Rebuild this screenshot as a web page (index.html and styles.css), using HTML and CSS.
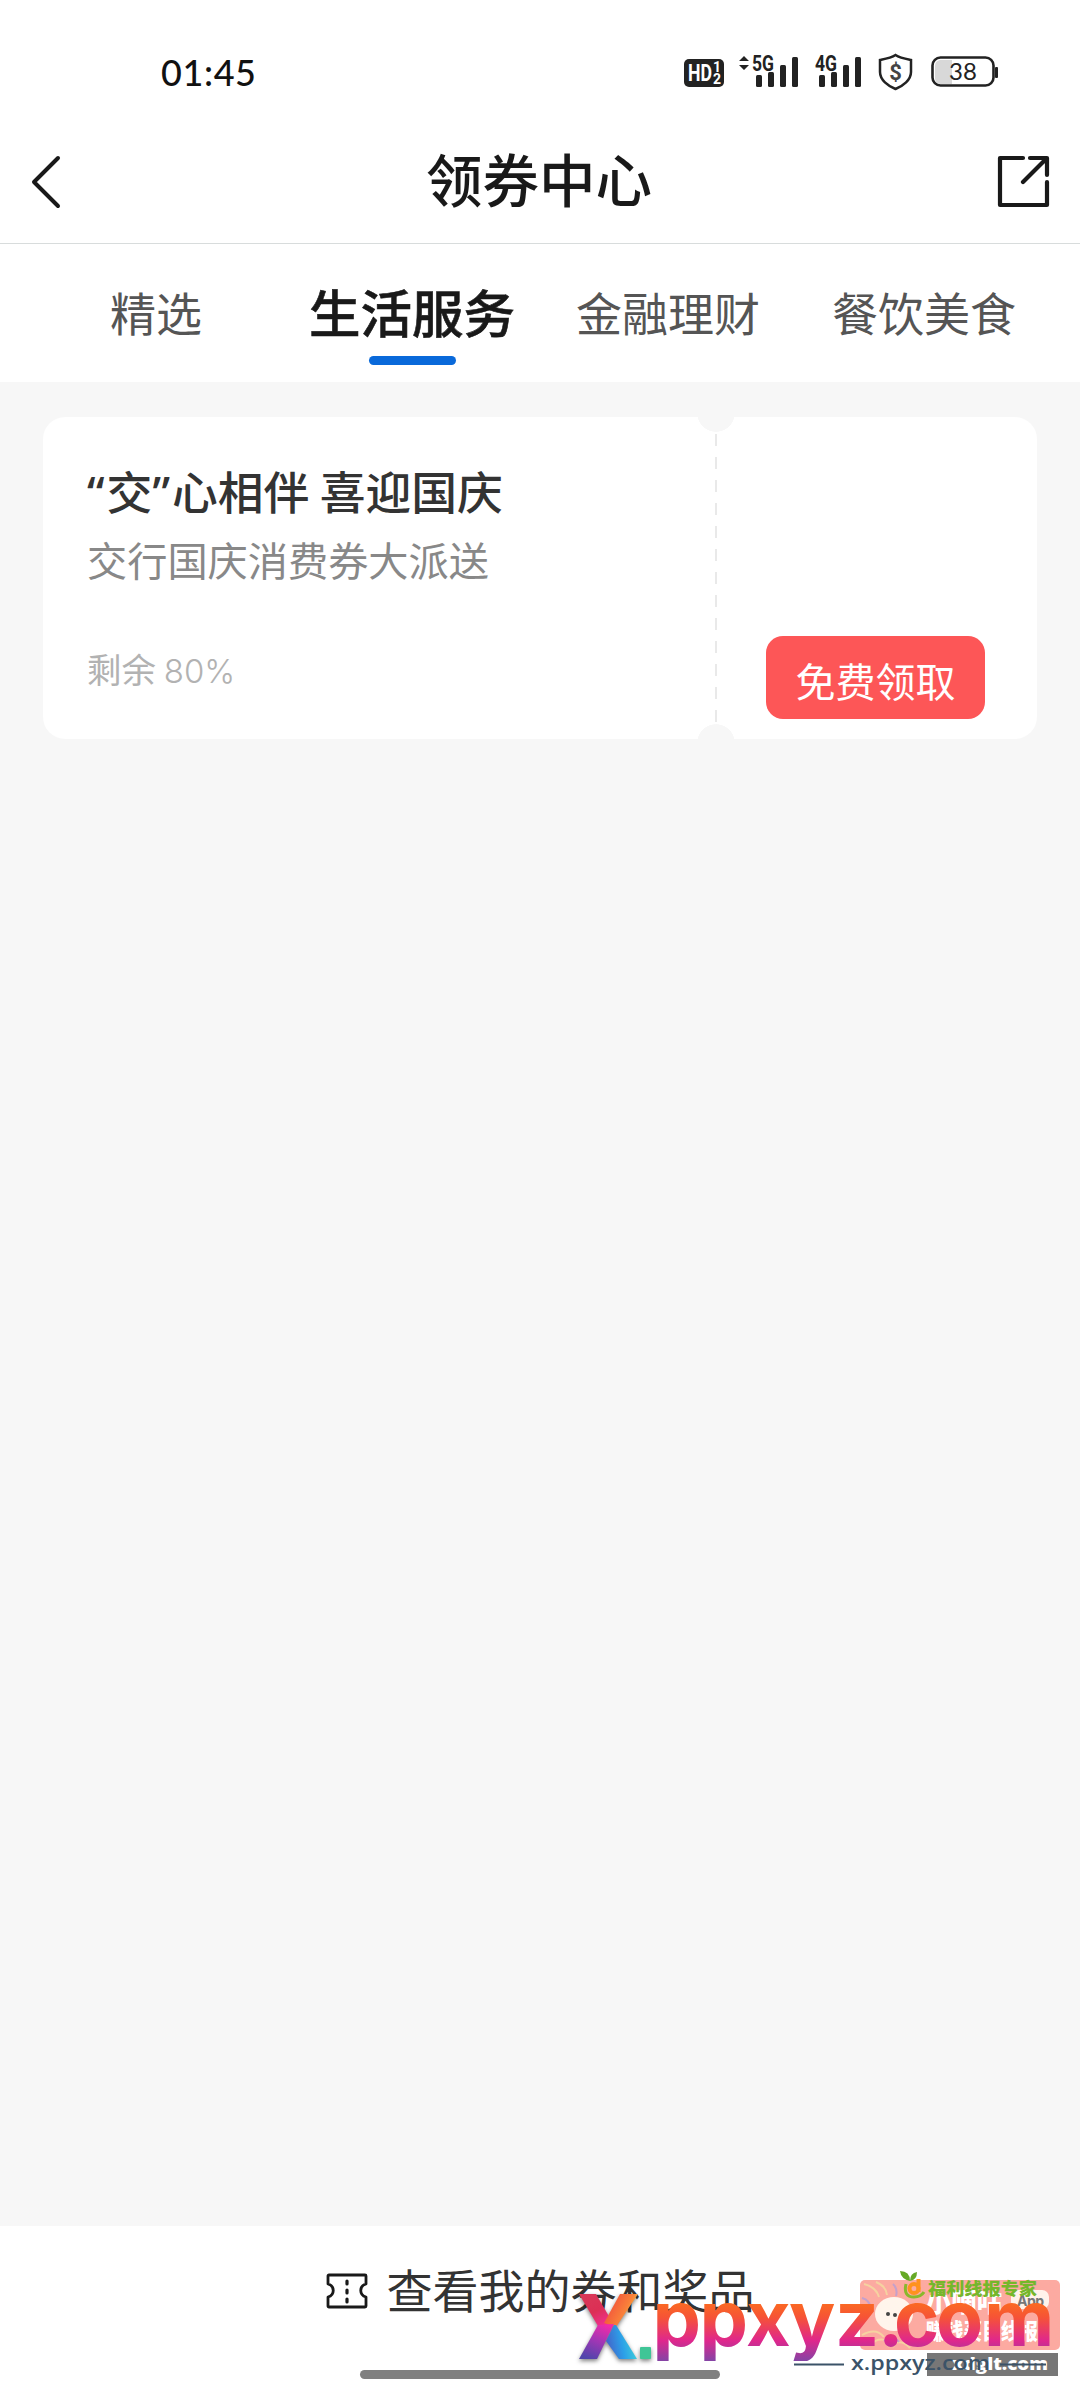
FILE: index.html
```html
<!DOCTYPE html>
<html lang="zh-CN">
<head>
<meta charset="utf-8">
<title>领券中心</title>
<link rel="stylesheet" href="styles.css">
</head>
<body>
<div class="screen">
  <header class="status">
    <time class="clock">01:45</time>
    <svg class="status-icons" width="320" height="44" viewBox="0 0 320 44">
      <g fill="#222">
        <rect x="0" y="7" width="40" height="28" rx="5"/>
        <path d="M55 9l5-5 5 5zM55 13l5 5 5-5z"/>
        <rect x="72" y="23" width="6" height="12" rx="1.5"/><rect x="84" y="20" width="6" height="15" rx="1.5"/><rect x="96" y="13" width="6" height="22" rx="1.5"/><rect x="108" y="5" width="6" height="30" rx="1.5"/>
        <rect x="135" y="23" width="6" height="12" rx="1.5"/><rect x="147" y="20" width="6" height="15" rx="1.5"/><rect x="159" y="13" width="6" height="22" rx="1.5"/><rect x="171" y="5" width="6" height="30" rx="1.5"/>
        <rect x="311" y="15" width="3" height="11" rx="1"/>
      </g>
      <g class="status-text">
        <text class="hd" x="4" y="28.500" textLength="24" lengthAdjust="spacingAndGlyphs">HD</text>
        <text class="hd-num" x="29" y="20">1</text><text class="hd-num" x="29" y="32">2</text>
        <text class="net" x="68" y="18.500" textLength="22" lengthAdjust="spacingAndGlyphs">5G</text>
        <text class="net" x="131" y="18.500" textLength="22" lengthAdjust="spacingAndGlyphs">4G</text>
        <text class="coin" x="211.500" y="28" text-anchor="middle">$</text>
      </g>
      <path d="M211.500 3C216 6 222 7 227 8V20C227 28 219 34 211.500 37C204 34 196 28 196 20V8C201 7 207 6 211.500 3Z" fill="none" stroke="#222" stroke-width="2.500"/>
      <path d="M256 8h12v24h-12q-5-1-5-6V14q0-5 5-6z" fill="#d8d8d8"/>
      <rect x="248.500" y="5.500" width="61" height="28" rx="8" fill="none" stroke="#222" stroke-width="2.600"/>
      <text class="level" x="279" y="28" text-anchor="middle">38</text>
    </svg>
  </header>
  <nav class="titlebar">
    <svg width="32" height="54" viewBox="0 0 32 54"><path d="M28 3L4 27l24 24" fill="none" stroke="#191919" stroke-width="4" stroke-linecap="round" stroke-linejoin="round"/></svg>
    <h1>领券中心</h1>
    <svg width="54" height="54" viewBox="0 0 54 54"><path d="M26 3H3v47h47V27M33 3h17v17M49 4L26 27" fill="none" stroke="#191919" stroke-width="4.200" stroke-linecap="round" stroke-linejoin="round"/></svg>
  </nav>
  <div class="tabs">
    <a class="tab">精选</a><a class="tab active">生活服务</a><a class="tab">金融理财</a><a class="tab">餐饮美食</a>
  </div>
  <main class="content">
    <article class="coupon">
      <section class="info">
        <h2><span class="quote">“</span>交<span class="quote">”</span>心相伴 喜迎国庆</h2>
        <p class="desc">交行国庆消费券大派送</p>
        <p class="left">剩余 <span>80%</span></p>
      </section>
      <section class="action"><button>免费领取</button></section>
    </article>
  </main>
  <footer class="footer">
    <div class="my-coupons">
      <svg width="42" height="36" viewBox="0 0 42 36"><path d="M3 2H39Q40 2 40 3V11C33 13 33 22 40 24V33Q40 34 39 34H3Q2 34 2 33V24C9 22 9 13 2 11V3Q2 2 3 2Z" fill="none" stroke="#191919" stroke-width="2.800" stroke-linejoin="round"/><path d="M21 8v3M21 17v3M21 26v3" stroke="#191919" stroke-width="3.200" stroke-linecap="round"/></svg>
      <span>查看我的券和奖品</span>
    </div>
    <div class="handle"></div>
    <svg class="marks" width="520" height="150" viewBox="560 2250 520 150">
      <defs>
        <linearGradient id="warm" gradientUnits="userSpaceOnUse" x1="0" y1="2303" x2="0" y2="2361"><stop offset="0" stop-color="#fb6a22"/><stop offset=".25" stop-color="#f65336"/><stop offset=".65" stop-color="#df278d"/><stop offset="1" stop-color="#8444a5"/></linearGradient>
        <linearGradient id="topLeft" x1="0" y1="0" x2=".6" y2="1"><stop offset="0" stop-color="#d83a58"/><stop offset=".6" stop-color="#dc2f55"/><stop offset="1" stop-color="#ef2f8c"/></linearGradient>
        <linearGradient id="topRight" x1="0" y1="0" x2="1" y2=".5"><stop offset=".2" stop-color="#f2503c"/><stop offset=".7" stop-color="#f9813a"/><stop offset="1" stop-color="#eed83f"/></linearGradient>
        <linearGradient id="bottomLeft" x1=".7" y1="0" x2=".3" y2="1"><stop offset="0" stop-color="#f02ba8"/><stop offset=".45" stop-color="#a535b5"/><stop offset="1" stop-color="#5045ab"/></linearGradient>
        <linearGradient id="bottomRight" x1="0" y1=".6" x2="1" y2=".4"><stop offset="0" stop-color="#4560c8"/><stop offset=".5" stop-color="#2c9fe8"/><stop offset="1" stop-color="#40d6d8"/></linearGradient>
        <clipPath id="descenders"><rect x="650" y="2290" width="410" height="71"/></clipPath>
      </defs>
      <rect x="860" y="2280" width="200" height="70" rx="5" fill="#fcaaa1"/>
      <g fill="none" stroke="#f6d2a0" stroke-width="2"><path d="M864 2284q12 3 15 13M876 2282q10 4 11 13M862 2335q14-8 22 2M870 2345q12-12 24 2M888 2347q12-10 22 1"/><path d="M862 2298q8 2 9 11M884 2341q8-8 15 1M893 2284q5 5 3 12" stroke="#c5a0cb"/></g>
      <ellipse cx="894" cy="2314" rx="19" ry="17" fill="#fff5ec"/><circle cx="888" cy="2314" r="2" fill="#444"/><circle cx="895" cy="2315" r="2" fill="#444"/>
      <rect x="1011" y="2290" width="38" height="19" rx="7" fill="#fff2ea"/>
      <text class="app" x="1017" y="2306" textLength="27">App</text>
      <text class="brand" x="926" y="2312" textLength="76" lengthAdjust="spacingAndGlyphs">小嘀咕</text>
      <text class="slogan" x="926" y="2339" textLength="112" lengthAdjust="spacingAndGlyphs">赚钱买目线报</text>
      <path d="M910 2281q-9-2-10-10 10 0 10 10q0-8 7-9 0 8-7 9" fill="#66a926"/>
      <path d="M906 2284q-3 13 8 13 7 0 10-5" fill="none" stroke="#8ab82c" stroke-width="3"/>
      <circle cx="914" cy="2288.500" r="4.500" fill="none" stroke="#ff921e" stroke-width="4"/><path d="M918.500 2279v13" stroke="#ff921e" stroke-width="4"/>
      <text class="expert" x="928" y="2295" textLength="109" lengthAdjust="spacingAndGlyphs">福利线报专家</text>
      <rect x="927" y="2353" width="131" height="23" fill="#777"/>
      <text class="domain" x="952" y="2370" textLength="96" lengthAdjust="spacingAndGlyphs">xdglt.com</text>
      <path d="M794 2364.500h50M1000 2364.500h46" stroke="#3b5368" stroke-width="2"/>
      <text class="small-mark" x="851" y="2370" textLength="139" lengthAdjust="spacingAndGlyphs">x.ppxyz.com</text>
      <g class="logo-x"><path d="M579 2294h17l18 31-16 1z" fill="url(#topLeft)"/><path d="M620 2294h18l-22 33-12-4z" fill="url(#topRight)"/><path d="M598 2325l16-1-17 35h-18z" fill="url(#bottomLeft)"/><path d="M614 2325l2 0 21 34h-18l-13-18z" fill="url(#bottomRight)"/><rect x="640" y="2347" width="11" height="12" rx="1" fill="#3fc596"/></g>
      <g clip-path="url(#descenders)"><text class="big-mark" x="652.5 699.5 746 789 835 878 894 936 984" y="2346" fill="url(#warm)">ppxyz.com</text></g>
    </svg>
  </footer>
</div>
</body>
</html>
```
FILE: styles.css
```css
* { box-sizing: border-box; }
body { margin: 0; background: #f7f7f7; font-family: "Noto Sans CJK SC", sans-serif; }
h1, h2, p { margin: 0; }
svg { display: block; flex: none; }
.screen { width: 1080px; height: 2400px; display: flex; flex-direction: column; overflow: hidden; }
.status { height: 120px; padding: 51px 80px 0 161px; display: flex; justify-content: space-between; background: #fff; }
.clock { font: 500 36px/42px Lato, sans-serif; color: #111; letter-spacing: .6px; }
.status-icons { margin-right: -4px; margin-top: 1px; }
.status-text { font-family: Roboto, sans-serif; font-weight: 700; fill: #222; }
.hd { font-size: 23px; fill: #fff; }
.hd-num { font-size: 14px; fill: #fff; }
.net { font-size: 22px; stroke: #fff; stroke-width: 2px; paint-order: stroke; }
.coin { font-size: 22px; fill: #444; }
.level { font: 400 24px Lato, sans-serif; fill: #222; }
.titlebar { height: 124px; padding: 0 29px 0 30px; display: flex; align-items: center; justify-content: space-between; background: #fff; border-bottom: 1px solid #d8dcdc; }
.titlebar h1 { padding-bottom: 9px; font-size: 56.500px; line-height: 80px; font-weight: 500; color: #191919; margin-left: 19px; }
.tabs { height: 138px; padding: 0 28px; display: grid; grid-template-columns: repeat(4, 1fr); background: #fff; }
.tab { display: flex; flex-direction: column; align-items: center; padding-top: 33px; font-size: 46px; line-height: 68px; color: #555; }
.active { font-size: 51.500px; font-weight: 500; -webkit-text-stroke: .6px #191919; color: #191919; }
.active::after { content: ""; width: 87px; height: 9px; margin-top: 11px; border-radius: 5px; background: #0969da; }
.content { flex: 1; padding: 35px 43px; }
.coupon { height: 322px; display: flex; border-radius: 22px; overflow: hidden; background: radial-gradient(circle at 673px -4px, #f7f7f7 18.500px, transparent 19px), radial-gradient(circle at 673px 326px, #f7f7f7 18.500px, transparent 19px), repeating-linear-gradient(#e9e9e9 0 12px, transparent 12px 23px) 672px 17px / 2px 289px no-repeat, #fff; }
.info { width: 674px; padding: 40px 0 0 44px; }
.info h2 { font-size: 45.800px; line-height: 66px; font-weight: 500; color: #333; white-space: nowrap; }
.quote { font-family: "Noto Sans", sans-serif; letter-spacing: 2px; }
.desc { font-size: 40.200px; line-height: 60px; margin-top: 4px; color: #888; }
.left { font-size: 34.500px; line-height: 50px; margin-top: 54px; color: #b2b2b2; }
.left span { font-family: Inter, sans-serif; font-weight: 300; font-size: 33px; }
.action { flex: 1; display: flex; align-items: flex-end; padding: 0 52px 20px 49px; }
.action button { width: 219px; height: 83px; padding: 4px 0 0; border: 0; border-radius: 17px; background: #fd5657; color: #fff; font: 400 40px/60px "Noto Sans CJK SC", sans-serif; }
.footer { height: 174px; position: relative; background: #fff; display: flex; flex-direction: column; align-items: center; }
.my-coupons { height: 130px; display: flex; align-items: center; gap: 19px; color: #333; font-size: 46px; line-height: 68px; }
.my-coupons span { padding-bottom: 7px; }
.handle { width: 360px; height: 9px; margin-top: 14px; border-radius: 5px; background: #808080; }
.marks { position: absolute; right: 0; bottom: 0; font-family: "Noto Sans CJK SC", sans-serif; }
.app { font: 700 14px Inter, sans-serif; fill: #777; }
.brand { font-size: 27px; font-weight: 900; fill: #fff; }
.slogan { font-size: 22px; font-weight: 900; fill: #fff; }
.expert { font-size: 17px; font-weight: 900; fill: #75b72b; }
.domain { font: 800 17px "Open Sans", sans-serif; fill: #fff; }
.small-mark { font: 600 20px "Open Sans", sans-serif; fill: #3b5368; }
.logo-x { filter: drop-shadow(0 2px 2px rgba(0, 0, 0, .5)); }
.big-mark { font: 700 77px Inter, sans-serif; }
```
